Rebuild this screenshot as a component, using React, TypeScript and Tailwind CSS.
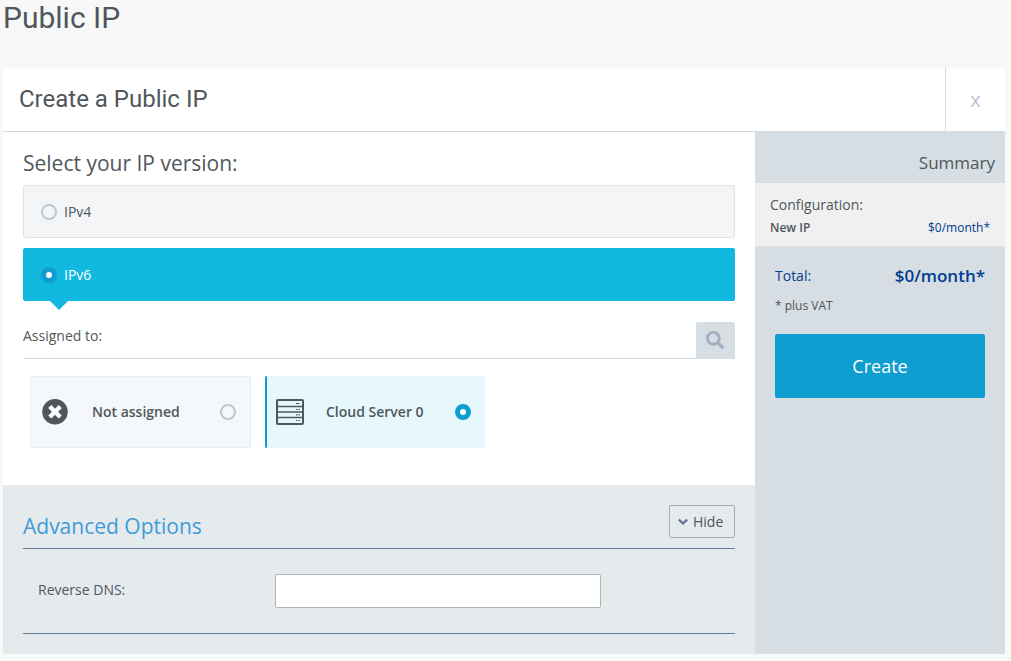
import { useState } from "react";
import { FaSearch } from "react-icons/fa";

const radioClass =
  "size-4 shrink-0 appearance-none rounded-full border-2 border-[#b9cad8] checked:border-5 checked:border-[#0d9dcf] checked:bg-white";

const CrossIcon = () => (
  <svg className="size-[26px] shrink-0" viewBox="0 0 26 26" aria-hidden="true">
    <circle cx="13" cy="12.8" r="12.8" fill="#4f575c" />
    <path
      d="M9.3 9.1l7.4 7.4M16.7 9.1l-7.4 7.4"
      stroke="#fff"
      strokeWidth="4.4"
      strokeLinecap="square"
    />
  </svg>
);

const ServerIcon = () => (
  <svg className="h-[26px] w-7 shrink-0" viewBox="0 0 28 26" aria-hidden="true">
    <rect x="1" y="1" width="26" height="24" rx="1" fill="none" stroke="#4f575c" strokeWidth="2" />
    <path d="M2 7.5h24M2 13h24M2 18.5h24" stroke="#4f575c" strokeWidth="1.3" />
    <path
      d="M20 4.5h3.5M20 10.5h1.5M22.5 10.5h1.5M20 15.8h1.5M22.5 15.8h1.5M20 21.5h1.5M22.5 21.5h1.5"
      stroke="#4f575c"
      strokeWidth="1.2"
    />
  </svg>
);

const versions = ["IPv4", "IPv6"];

const servers = [
  { name: "Not assigned", icon: <CrossIcon /> },
  { name: "Cloud Server 0", icon: <ServerIcon /> },
];

const Summary = () => {
  return (
    <aside className="w-[250px] shrink-0 bg-[#d6dde3]">
      <h3 className="px-2.5 pt-5 pb-2 text-right text-[17px] leading-6">Summary</h3>
      <div className="bg-[#f0f0f0] px-[15px] pt-3 pb-2 text-sm">
        <p className="leading-5">Configuration:</p>
        <p className="flex justify-between pt-[3px] text-xs leading-5">
          <span className="font-semibold">New IP</span>
          <span className="text-[#003d8f]">$0/month*</span>
        </p>
      </div>
      <div className="p-5">
        <p className="flex items-center justify-between text-[#003d8f]">
          <span className="text-sm">Total:</span>
          <span className="text-[17px] leading-5 font-semibold">$0/month*</span>
        </p>
        <p className="pt-3 text-xs leading-4">* plus VAT</p>
        <button
          type="button"
          className="mt-5 h-16 w-full rounded-xs bg-[#0d9dcf] text-lg text-white"
        >
          Create
        </button>
      </div>
    </aside>
  );
};

const AdvancedOptions = () => {
  const [open, setOpen] = useState(true);
  return (
    <section className="flex-1 bg-[#e5eaed] p-5">
      <div className="flex items-start justify-between border-b border-[#667d9c] pb-2.5">
        <h3 className="h-[33px] pt-[7px] text-[21px] leading-7 text-[#3f9bd9]">
          Advanced Options
        </h3>
        <button
          type="button"
          onClick={() => setOpen(!open)}
          className="flex h-[33px] w-[66px] items-center gap-[5px] rounded-xs border border-[#a3adc0] pl-2 text-sm"
        >
          <svg className="h-2 w-2.5" viewBox="0 0 10 8" aria-hidden="true">
            <path d="M0.8 1.6L5 5.4l4.2-3.8" fill="none" stroke="#667690" strokeWidth="2.3" />
          </svg>
          {open ? "Hide" : "Show"}
        </button>
      </div>
      {open && (
        <div className="flex border-b border-[#667d9c] py-[25px] pl-[15px]">
          <label htmlFor="reverse-dns" className="w-[237px] pt-1.5 text-sm">
            Reverse DNS:
          </label>
          <input
            id="reverse-dns"
            type="text"
            className="h-[34px] w-[326px] rounded-xs border border-[#b0b4b9] bg-white px-2 text-sm"
          />
        </div>
      )}
    </section>
  );
};

const App = () => {
  const [version, setVersion] = useState("IPv6");
  const [server, setServer] = useState("Cloud Server 0");

  return (
    <div className="min-h-screen bg-[#f8f8f8] pr-1.5 pb-[7px] pl-[3px] font-['Open_Sans',sans-serif] text-[#4f575c]">
      <h1 className="pb-8 font-[Roboto,sans-serif] text-3xl leading-9">Public IP</h1>
      <main className="overflow-hidden rounded-xs bg-white">
        <header className="flex h-[63px] items-stretch justify-between">
          <h2 className="flex-1 pt-[15px] pl-4 font-[Roboto,sans-serif] text-2xl leading-8">
            Create a Public IP
          </h2>
          <button
            type="button"
            aria-label="Close"
            className="w-[60px] border-l border-[#d6d8db] text-xl text-[#b9c3d3]"
          >
            x
          </button>
        </header>
        <div className="flex">
          <div className="flex min-w-0 flex-1 flex-col border-t border-[#d6d8db]">
            <div className="px-5 pt-[17px] pb-[37px]">
              <fieldset>
                <legend className="pb-[7px] text-[21px] leading-[29px]">
                  Select your IP version:
                </legend>
                <div className="flex flex-col gap-2.5">
                  {versions.map((v) => (
                    <label
                      key={v}
                      className="relative flex h-[53px] items-center gap-[7px] rounded-xs border border-[#e1e3e5] bg-[#f4f5f7] px-[17px] text-sm has-checked:border-[#11b8df] has-checked:bg-[#11b8df] has-checked:text-white"
                    >
                      <input
                        type="radio"
                        name="version"
                        checked={version === v}
                        onChange={() => setVersion(v)}
                        className={radioClass}
                      />
                      {v}
                      {version === v && (
                        <span className="absolute top-full left-[25px] border-x-10 border-t-10 border-x-transparent border-t-[#11b8df]" />
                      )}
                    </label>
                  ))}
                </div>
              </fieldset>
              <div className="mt-[21px] flex justify-between border-b border-[#d6dde3]">
                <p className="pt-1 text-sm">Assigned to:</p>
                <button
                  type="button"
                  aria-label="Search"
                  className="flex h-9 w-[39px] items-center rounded-t-xs bg-[#d6dde3] pl-2.5 text-lg text-[#a3aec2]"
                >
                  <FaSearch />
                </button>
              </div>
              <div className="flex gap-3.5 pt-[17px] pl-[7px]">
                {servers.map((s) => (
                  <label
                    key={s.name}
                    className="flex h-[72px] w-[221px] items-center rounded-xs border border-[#e9eef2] bg-[#f4f8fb] pr-3.5 pl-[11px] text-sm font-semibold has-checked:w-[220px] has-checked:border-y-0 has-checked:border-r-0 has-checked:border-l-2 has-checked:border-[#0d9dcf] has-checked:bg-[#e6f8fd] has-checked:pl-[9px]"
                  >
                    <span className="flex w-[50px]">{s.icon}</span>
                    <span className="flex-1">{s.name}</span>
                    <input
                      type="radio"
                      name="server"
                      checked={server === s.name}
                      onChange={() => setServer(s.name)}
                      className={radioClass}
                    />
                  </label>
                ))}
              </div>
            </div>
            <AdvancedOptions />
          </div>
          <Summary />
        </div>
      </main>
    </div>
  );
};

export default App;
